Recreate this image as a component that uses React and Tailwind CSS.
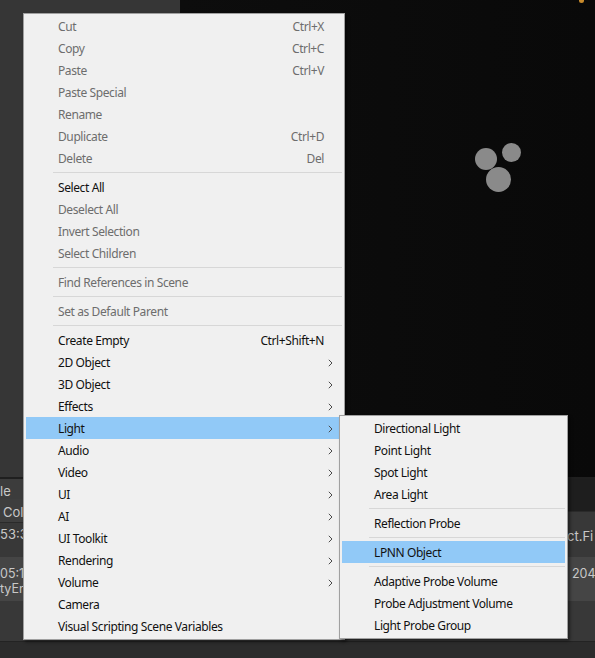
import { Fragment } from 'react';

const mainItems = [
  { label: 'Cut', shortcut: 'Ctrl+X', disabled: true },
  { label: 'Copy', shortcut: 'Ctrl+C', disabled: true },
  { label: 'Paste', shortcut: 'Ctrl+V', disabled: true },
  { label: 'Paste Special', disabled: true },
  { label: 'Rename', disabled: true },
  { label: 'Duplicate', shortcut: 'Ctrl+D', disabled: true },
  { label: 'Delete', shortcut: 'Del', disabled: true },
  'sep',
  { label: 'Select All' },
  { label: 'Deselect All', disabled: true },
  { label: 'Invert Selection', disabled: true },
  { label: 'Select Children', disabled: true },
  'sep',
  { label: 'Find References in Scene', disabled: true },
  'sep',
  { label: 'Set as Default Parent', disabled: true },
  'sep',
  { label: 'Create Empty', shortcut: 'Ctrl+Shift+N' },
  { label: '2D Object', sub: true },
  { label: '3D Object', sub: true },
  { label: 'Effects', sub: true },
  { label: 'Light', sub: true, active: true },
  { label: 'Audio', sub: true },
  { label: 'Video', sub: true },
  { label: 'UI', sub: true },
  { label: 'AI', sub: true },
  { label: 'UI Toolkit', sub: true },
  { label: 'Rendering', sub: true },
  { label: 'Volume', sub: true },
  { label: 'Camera' },
  { label: 'Visual Scripting Scene Variables' },
];

const lightItems = [
  { label: 'Directional Light' },
  { label: 'Point Light' },
  { label: 'Spot Light' },
  { label: 'Area Light' },
  'sep',
  { label: 'Reflection Probe' },
  'sep',
  { label: 'LPNN Object', active: true },
  'sep',
  { label: 'Adaptive Probe Volume' },
  { label: 'Probe Adjustment Volume' },
  { label: 'Light Probe Group' },
];

function Chevron() {
  return (
    <svg width="5" height="8" viewBox="0 0 5 8" className="ml-[4px]">
      <path d="M0.8 0.8 L4 4 L0.8 7.2" fill="none" stroke="#4a4a4a" strokeWidth="1" />
    </svg>
  );
}

function MenuList({ items }) {
  return items.map((item, i) => {
    if (item === 'sep') {
      return (
        <div key={i} className="h-[7px] flex items-center pl-[29px] pr-[2px]">
          <div className="h-px w-full bg-[#d7d7d7]" />
        </div>
      );
    }
    return (
      <div
        key={i}
        className={
          'mx-[2px] h-[22px] flex items-center pl-[32px] pt-[2px] ' +
          (item.active ? 'bg-[#91c9f7] ' : '') +
          (item.disabled ? 'text-[#6d6d6d]' : 'text-[#111111]')
        }
      >
        <span className="flex-1 whitespace-nowrap">{item.label}</span>
        {item.shortcut && <span className="whitespace-nowrap">{item.shortcut}</span>}
        <span className="w-[18px] flex items-center">{item.sub && <Chevron />}</span>
      </div>
    );
  });
}

export default function App() {
  return (
    <div
      className="relative w-[595px] h-[658px] overflow-hidden bg-[#383838]"
      style={{ fontFamily: 'Inter, Roboto, sans-serif' }}
    >
      {/* Editor background */}
      <div className="flex h-[477px]">
        <div className="w-[180px] bg-[#363636]" />
        <div className="relative flex-1 bg-gradient-to-r from-[#0d0d0d] to-[#090909]">
          <div className="absolute right-[11px] top-[-2px] w-[5px] h-[5px] rounded-full bg-[#c98b2c]" />
          <div className="absolute left-[295px] top-[148px] w-[22px] h-[22px] rounded-full bg-[#8a8a8a]" />
          <div className="absolute left-[322px] top-[143px] w-[19px] h-[19px] rounded-full bg-[#8a8a8a]" />
          <div className="absolute left-[306px] top-[167px] w-[25px] h-[25px] rounded-full bg-[#8a8a8a]" />
        </div>
      </div>

      {/* Bottom console panel */}
      <div className="h-[2px] bg-[#1f1f1f]" />
      <div className="flex h-[43px]">
        <div className="w-[180px] bg-[#3c3c3c] flex flex-col text-[13px] text-[#c8c8c8] leading-[20px]">
          <div className="h-[20px] pt-[2px]">le</div>
          <div className="h-[23px] pl-[3px] pt-[3px] bg-[#3e3e3e]">Coll</div>
        </div>
        <div className="flex-1 flex flex-col">
          <div className="h-[32px] bg-[#1e1e1e]" />
          <div className="h-px bg-[#2a2a2a]" />
          <div className="flex-1 bg-[#383838]" />
        </div>
      </div>
      <div className="flex h-px">
        <div className="w-[180px] bg-[#2a2a2a]" />
        <div className="flex-1 bg-[#383838]" />
      </div>
      <div className="relative h-[34px] text-[13px] text-[#c8c8c8] leading-[20px]">
        <div className="pt-[1px]">53:3</div>
        <div className="absolute left-[567px] top-[3px] whitespace-nowrap">ct.Fi</div>
      </div>
      <div className="relative h-[44px] bg-[#454545] text-[12.5px] text-[#c8c8c8] leading-[15px]">
        <div className="pt-[9px]">05:1</div>
        <div>tyEn</div>
        <div className="absolute left-[572px] top-[9px] whitespace-nowrap">204</div>
      </div>
      <div className="h-[40px] bg-[#383838]" />
      <div className="h-px bg-[#232323]" />
      <div className="h-[20px] bg-[#2c2c2c]" />

      {/* Context menu */}
      <div
        className="absolute left-[23px] top-[13px] w-[322px] bg-[#f0f0f0] border border-[#a0a0a0] pt-px pb-[2px] text-[12px] tracking-[-0.4px] shadow-[2px_2px_3px_rgba(0,0,0,0.45)]"
        style={{ fontFamily: '"Noto Sans", "Open Sans", sans-serif' }}
      >
        <MenuList items={mainItems} />
      </div>

      {/* Light submenu */}
      <div
        className="absolute left-[339px] top-[415px] w-[229px] bg-[#f0f0f0] border border-[#a0a0a0] pt-px pb-[2px] text-[12px] tracking-[-0.4px] shadow-[2px_2px_3px_rgba(0,0,0,0.45)]"
        style={{ fontFamily: '"Noto Sans", "Open Sans", sans-serif' }}
      >
        <MenuList items={lightItems} />
      </div>
    </div>
  );
}
